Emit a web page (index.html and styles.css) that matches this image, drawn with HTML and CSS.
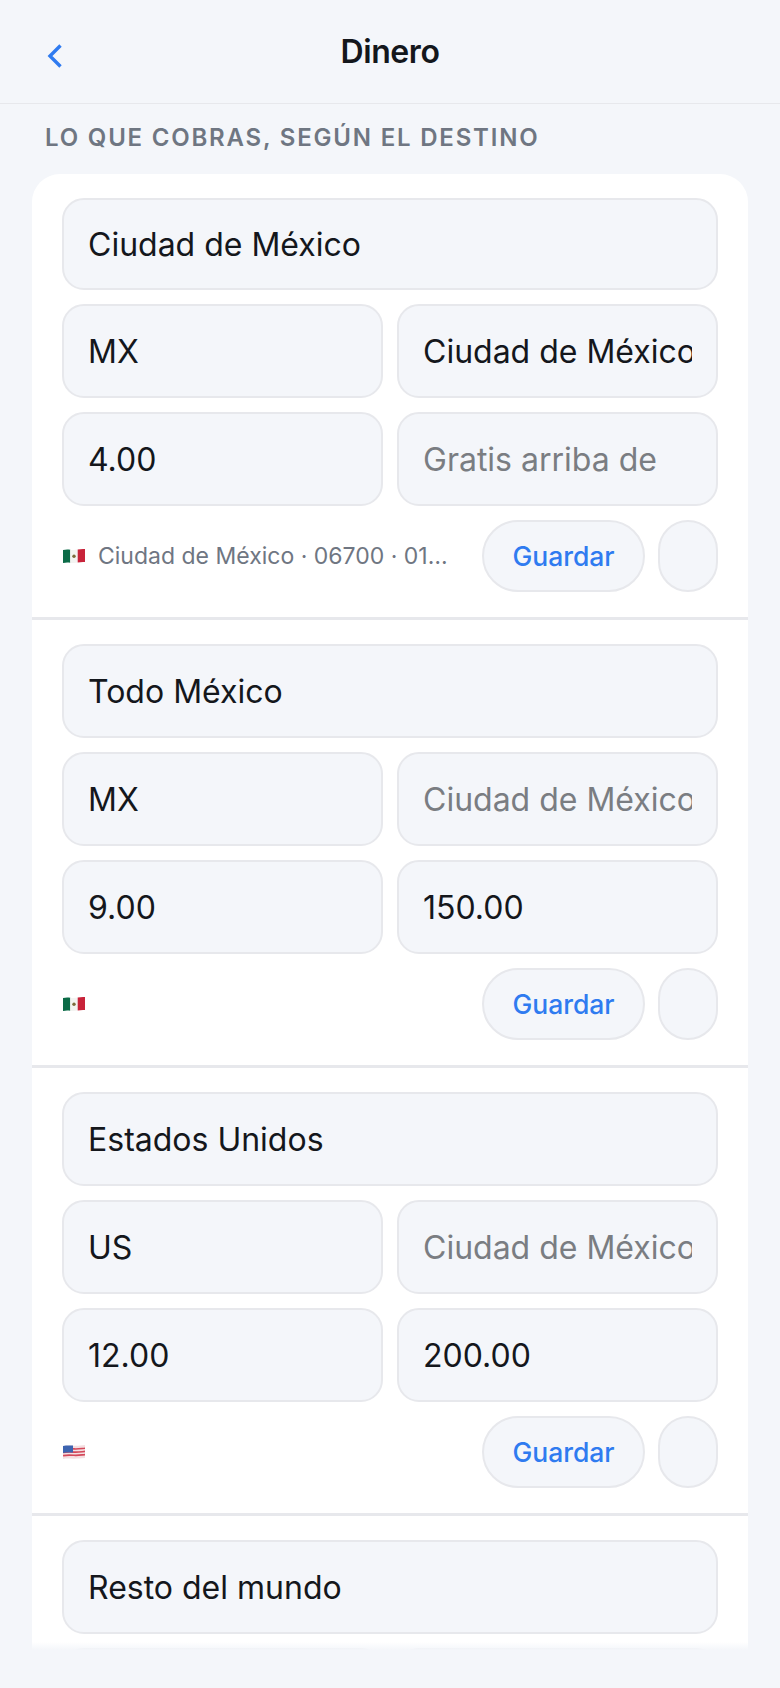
FILE: index.html
```html
<!DOCTYPE html>
<html lang="es">
  <head>
    <meta charset="UTF-8">
    <title>Dinero</title>
    <link rel="stylesheet" href="styles.css">
  </head>
  <body>
    <div class="screen">
      <header class="topbar">
        <a class="back" href="#" aria-label="Volver">
          <svg width="18" height="26" viewBox="0 0 18 26"><path d="M14.5 2.500 4 13l10.500 10.500" fill="none" stroke="#2f7bf0" stroke-width="3.4"/></svg>
        </a>
        <h1>Dinero</h1>
      </header>

      <h2 class="section-label">Lo que cobras, según el destino</h2>

      <section class="card">
        <form class="zone">
          <input class="field field--wide" value="Ciudad de México">
          <input class="field" value="MX">
          <input class="field" placeholder="Ciudad de México" value="Ciudad de México">
          <input class="field" value="4.00">
          <input class="field" placeholder="Gratis arriba de">
          <div class="zone-footer">
            <svg class="flag" viewBox="0 0 22 16"><path d="M0 2C3 1.200 5 1.300 7.300 1.700V14.700C5 14.300 3 14.200 0 15Z" fill="#0b6b47"/><path d="M7.300 1.700C9.500 2 12 2 14.700 1.500V14.500C12 15 9.500 15 7.300 14.700Z" fill="#f3f3f1"/><path d="M14.700 1.500C17 1 19.500.8 22 1V14C19.500 13.800 17 14 14.700 14.500Z" fill="#c8233a"/><circle cx="11" cy="8.300" r="1.700" fill="#7b6a3c"/></svg>
            <span class="zone-meta">Ciudad de México · 06700 · 01000 · 03100</span>
            <button class="btn" type="button">Guardar</button>
            <button class="btn btn--empty" type="button"></button>
          </div>
        </form>

        <form class="zone">
          <input class="field field--wide" value="Todo México">
          <input class="field" value="MX">
          <input class="field" placeholder="Ciudad de México">
          <input class="field" value="9.00">
          <input class="field" value="150.00">
          <div class="zone-footer">
            <svg class="flag" viewBox="0 0 22 16"><path d="M0 2C3 1.200 5 1.300 7.300 1.700V14.700C5 14.300 3 14.200 0 15Z" fill="#0b6b47"/><path d="M7.300 1.700C9.500 2 12 2 14.700 1.500V14.500C12 15 9.500 15 7.300 14.700Z" fill="#f3f3f1"/><path d="M14.700 1.500C17 1 19.500.8 22 1V14C19.500 13.800 17 14 14.700 14.500Z" fill="#c8233a"/><circle cx="11" cy="8.300" r="1.700" fill="#7b6a3c"/></svg>
            <span class="zone-meta"></span>
            <button class="btn" type="button">Guardar</button>
            <button class="btn btn--empty" type="button"></button>
          </div>
        </form>

        <form class="zone">
          <input class="field field--wide" value="Estados Unidos">
          <input class="field" value="US">
          <input class="field" placeholder="Ciudad de México">
          <input class="field" value="12.00">
          <input class="field" value="200.00">
          <div class="zone-footer">
            <svg class="flag" viewBox="0 0 22 16"><path d="M0 2C4 1.200 7 1.400 11 1.700S18 1.400 22 1V14C18 14.400 15 14.600 11 14.700S4 14.200 0 15Z" fill="#f4dfe1"/><path d="M0 5.200C4 4.400 7 4.600 11 4.900S18 4.600 22 4.200M0 8.400C4 7.600 7 7.800 11 8.100S18 7.800 22 7.400M0 11.600C4 10.800 7 11 11 11.300S18 11 22 10.600" fill="none" stroke="#d4485a" stroke-width="1.600"/><path d="M0 2C3 1.400 6 1.400 10 1.600V8.600C6 8.400 3 8.400 0 9Z" fill="#3d64b0"/></svg>
            <span class="zone-meta"></span>
            <button class="btn" type="button">Guardar</button>
            <button class="btn btn--empty" type="button"></button>
          </div>
        </form>

        <form class="zone">
          <input class="field field--wide" value="Resto del mundo">
          <input class="field" value="">
          <input class="field" value="">
        </form>
      </section>

      <div class="bottom-fade"></div>
    </div>
  </body>
</html>
```

FILE: styles.css
```css
:root {
  font-family: Inter, "Liberation Sans", Arial, sans-serif;
  color: #14171c;
  background-color: #f4f6fa;
}

html, body {
  margin: 0;
  height: 100%;
}

.screen {
  position: relative;
  height: 1688px;
  overflow: hidden;
}

.topbar {
  display: flex;
  align-items: center;
  justify-content: center;
  position: relative;
  height: 104px;
  box-sizing: border-box;
  border-bottom: 1px solid #e7e8ec;
}

.topbar h1 {
  margin: 0;
  font-size: 32px;
  font-weight: 600;
  letter-spacing: -0.4px;
}

.back {
  position: absolute;
  left: 46px;
  top: 43px;
  line-height: 0;
}

.section-label {
  margin: 0;
  padding: 20px 45px 0;
  height: 50px;
  font-size: 24px;
  line-height: 28px;
  font-weight: 600;
  letter-spacing: 1.8px;
  text-transform: uppercase;
  color: #6f7682;
}

.card {
  margin: 0 32px;
  background: #fff;
  border-radius: 28px 28px 0 0;
  overflow: hidden;
}

.zone {
  display: grid;
  grid-template-columns: 1fr 1fr;
  gap: 14px;
  padding: 24px 30px 25px;
  border-bottom: 3px solid #e7e8ec;
}

.field {
  min-width: 0;
  height: 94px;
  box-sizing: border-box;
  padding: 0 24px;
  background: #f4f6fa;
  border: 2px solid #e7e8ec;
  border-radius: 22px;
  font: inherit;
  font-size: 32px;
  color: #14171c;
}

.field::placeholder {
  color: #7a7d82;
  opacity: 1;
}

.field--wide {
  grid-column: 1 / -1;
}

.card .zone:first-child .field--wide {
  height: 92px;
}

.zone-footer {
  grid-column: 1 / -1;
  display: flex;
  align-items: center;
  gap: 13px;
  height: 72px;
}

.flag {
  flex: none;
  width: 22px;
  height: 16px;
  margin-left: 1px;
}

.zone-meta {
  flex: 1;
  min-width: 0;
  font-size: 23px;
  color: #6f7682;
  white-space: nowrap;
  overflow: hidden;
  text-overflow: ellipsis;
}

.btn {
  flex: none;
  width: 163px;
  height: 72px;
  padding: 0;
  margin-left: 16px;
  background: #f4f6fa;
  border: 2px solid #e7e8ec;
  border-radius: 36px;
  font: inherit;
  font-size: 26.5px;
  font-weight: 500;
  color: #2f7bf0;
}

.btn--empty {
  width: 60px;
  margin-left: 0;
}

.bottom-fade {
  position: absolute;
  left: 0;
  right: 0;
  bottom: 0;
  height: 38px;
  background: #f4f6fa;
}

.bottom-fade::before {
  content: "";
  position: absolute;
  left: 0;
  right: 0;
  top: -8px;
  height: 8px;
  background: linear-gradient(to bottom, rgba(244, 246, 250, 0), #f4f6fa);
}
```
